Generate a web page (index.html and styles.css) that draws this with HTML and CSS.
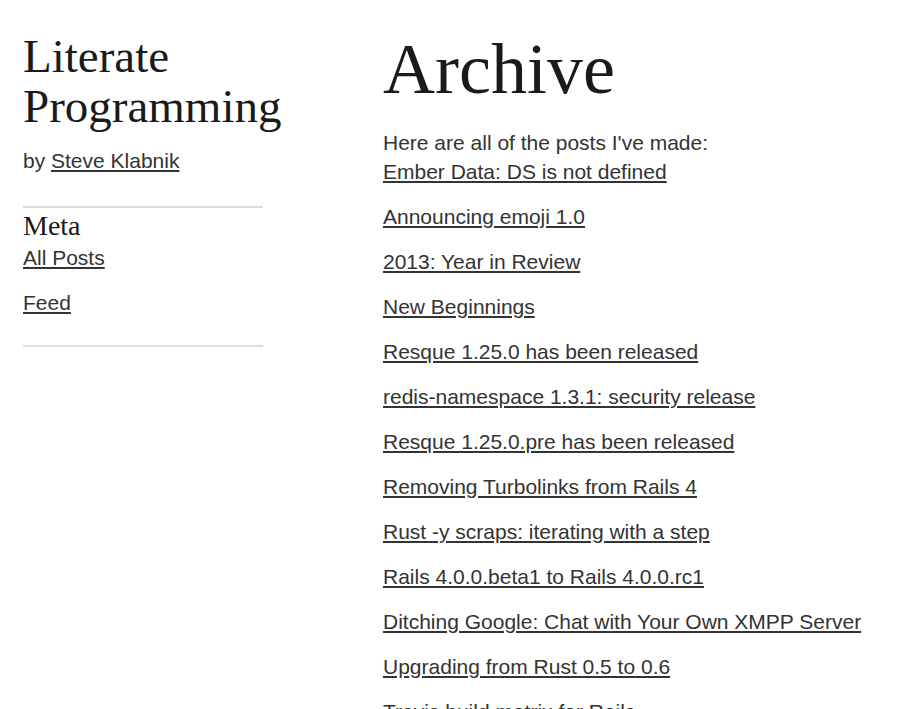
FILE: index.html
```html
<!DOCTYPE html>
<html>
<head>
<meta charset="utf-8">
<title>Archive - Literate Programming</title>
<link rel="stylesheet" href="styles.css">
</head>
<body>
<div class="page">
  <aside class="sidebar">
    <h1 class="site-title">Literate Programming</h1>
    <p class="byline">by <a href="#">Steve Klabnik</a></p>
    <hr class="rule">
    <h3 class="meta-title">Meta</h3>
    <ul class="links meta-links">
      <li><a href="#">All Posts</a></li>
      <li><a href="#">Feed</a></li>
    </ul>
    <hr class="rule rule-end">
  </aside>
  <main class="content">
    <h1 class="page-title">Archive</h1>
    <p class="intro">Here are all of the posts I've made:</p>
    <ul class="links">
      <li><a href="#">Ember Data: DS is not defined</a></li>
      <li><a href="#">Announcing emoji 1.0</a></li>
      <li><a href="#">2013: Year in Review</a></li>
      <li><a href="#">New Beginnings</a></li>
      <li><a href="#">Resque 1.25.0 has been released</a></li>
      <li><a href="#">redis-namespace 1.3.1: security release</a></li>
      <li><a href="#">Resque 1.25.0.pre has been released</a></li>
      <li><a href="#">Removing Turbolinks from Rails 4</a></li>
      <li><a href="#">Rust -y scraps: iterating with a step</a></li>
      <li><a href="#">Rails 4.0.0.beta1 to Rails 4.0.0.rc1</a></li>
      <li><a href="#">Ditching Google: Chat with Your Own XMPP Server</a></li>
      <li><a href="#">Upgrading from Rust 0.5 to 0.6</a></li>
      <li><a href="#">Travis build matrix for Rails</a></li>
      <li><a href="#">Announcing security_release_practice</a></li>
    </ul>
  </main>
</div>
</body>
</html>
```
FILE: styles.css
```css
html, body {
  margin: 0;
  padding: 0;
  background: #fff;
}
body {
  font-family: "Liberation Sans", Arial, sans-serif;
  font-size: 21px;
  line-height: 29px;
  color: #333;
}
a {
  color: #333;
  text-decoration: underline;
}
.page {
  display: grid;
  grid-template-columns: 240px 1fr;
  column-gap: 120px;
  padding: 28px 0 0 23px;
}
.site-title {
  font-family: "Liberation Serif", Georgia, serif;
  font-weight: normal;
  font-size: 47px;
  line-height: 50px;
  color: #1a1a1a;
  margin: 3px 0 0;
}
.byline {
  margin: 15px 0 0;
}
.rule {
  border: 0;
  border-top: 2px solid #ddd;
  margin: 31px 0 0;
  height: 0;
}
.rule-end {
  margin-top: 28px;
}
.meta-title {
  font-family: "Liberation Serif", Georgia, serif;
  font-weight: normal;
  font-size: 28px;
  line-height: 31px;
  color: #1a1a1a;
  margin: 2px 0 0;
}
.links {
  list-style: none;
  margin: 0;
  padding: 0;
}
.links li {
  margin: 0 0 16px;
}
.meta-links {
  margin-top: 2px;
}
.page-title {
  font-family: "Liberation Serif", Georgia, serif;
  font-weight: normal;
  font-size: 72px;
  line-height: 80px;
  color: #1a1a1a;
  margin: 1px 0 19px;
}
.intro {
  margin: 0;
}
```
